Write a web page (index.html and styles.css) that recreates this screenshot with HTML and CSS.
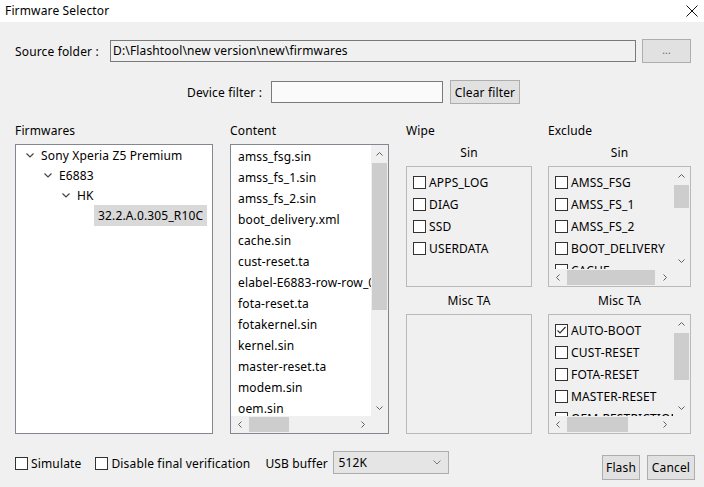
FILE: index.html
```html
<!DOCTYPE html>
<html>
<head>
<meta charset="utf-8">
<title>Firmware Selector</title>
<link rel="stylesheet" href="styles.css">
</head>
<body>
<div class="titlebar">
  <span class="title">Firmware Selector</span>
  <svg class="close" width="12" height="12" viewBox="0 0 12 12"><path d="M0.5 0.5 L11.5 11.5 M11.5 0.5 L0.5 11.5" stroke="#111" stroke-width="1" fill="none"/></svg>
</div>
<div class="main">
  <div class="row source">
    <span class="lbl src-lbl">Source folder :</span>
    <div class="textbox src-box">D:\Flashtool\new version\new\firmwares</div>
    <div class="btn dots">...</div>
  </div>
  <div class="row filter">
    <span class="lbl flt-lbl">Device filter :</span>
    <div class="textbox flt-box"></div>
    <div class="btn clear">Clear filter</div>
  </div>

  <div class="panels">
    <div class="col col-fw">
      <div class="plabel">Firmwares</div>
      <div class="tree">
        <div class="node l0"><span class="chevbox"><svg width="8" height="5" viewBox="0 0 8 5"><polyline points="0.5,0.5 4,4 7.5,0.5" fill="none" stroke="#444" stroke-width="1.2"/></svg></span><span>Sony Xperia Z5 Premium</span></div>
        <div class="node l1"><span class="chevbox"><svg width="8" height="5" viewBox="0 0 8 5"><polyline points="0.5,0.5 4,4 7.5,0.5" fill="none" stroke="#444" stroke-width="1.2"/></svg></span><span>E6883</span></div>
        <div class="node l2"><span class="chevbox"><svg width="8" height="5" viewBox="0 0 8 5"><polyline points="0.5,0.5 4,4 7.5,0.5" fill="none" stroke="#444" stroke-width="1.2"/></svg></span><span>HK</span></div>
        <div class="node l3"><span class="sel">32.2.A.0.305_R10C</span></div>
      </div>
    </div>

    <div class="col col-content">
      <div class="plabel">Content</div>
      <div class="sbox content-box">
        <div class="list files">
          <div class="item">amss_fsg.sin</div>
          <div class="item">amss_fs_1.sin</div>
          <div class="item">amss_fs_2.sin</div>
          <div class="item">boot_delivery.xml</div>
          <div class="item">cache.sin</div>
          <div class="item">cust-reset.ta</div>
          <div class="item">elabel-E6883-row-row_04a-sw-hk.sin</div>
          <div class="item">fota-reset.ta</div>
          <div class="item">fotakernel.sin</div>
          <div class="item">kernel.sin</div>
          <div class="item">master-reset.ta</div>
          <div class="item">modem.sin</div>
          <div class="item">oem.sin</div>
          <div class="item">partition-image.sin</div>
        </div>
        <div class="vs">
          <span class="arr"><svg width="7" height="4" viewBox="0 0 7 4"><polyline points="0.5,3.5 3.5,0.5 6.5,3.5" fill="none" stroke="#606060" stroke-width="1"/></svg></span>
          <div class="track"><div class="vthumb th-content"></div></div>
          <span class="arr"><svg width="7" height="4" viewBox="0 0 7 4"><polyline points="0.5,0.5 3.5,3.5 6.5,0.5" fill="none" stroke="#606060" stroke-width="1"/></svg></span>
        </div>
        <div class="hs">
          <span class="arr"><svg width="4" height="7" viewBox="0 0 4 7"><polyline points="3.5,0.5 0.5,3.5 3.5,6.5" fill="none" stroke="#606060" stroke-width="1"/></svg></span>
          <div class="track"><div class="hthumb hth-content"></div></div>
          <span class="arr"><svg width="4" height="7" viewBox="0 0 4 7"><polyline points="0.5,0.5 3.5,3.5 0.5,6.5" fill="none" stroke="#606060" stroke-width="1"/></svg></span>
        </div>
        <div class="corner"></div>
      </div>
    </div>

    <div class="col col-wipe">
      <div class="plabel">Wipe</div>
      <div class="sublabel">Sin</div>
      <div class="group g-top">
        <div class="checks">
          <div class="chk"><span class="cb"></span><span>APPS_LOG</span></div>
          <div class="chk"><span class="cb"></span><span>DIAG</span></div>
          <div class="chk"><span class="cb"></span><span>SSD</span></div>
          <div class="chk"><span class="cb"></span><span>USERDATA</span></div>
        </div>
      </div>
      <div class="sublabel sub2">Misc TA</div>
      <div class="group g-bot"></div>
    </div>

    <div class="col col-excl">
      <div class="plabel">Exclude</div>
      <div class="sublabel">Sin</div>
      <div class="group g-top sbox excl-box">
        <div class="list checks">
          <div class="chk"><span class="cb"></span><span>AMSS_FSG</span></div>
          <div class="chk"><span class="cb"></span><span>AMSS_FS_1</span></div>
          <div class="chk"><span class="cb"></span><span>AMSS_FS_2</span></div>
          <div class="chk"><span class="cb"></span><span>BOOT_DELIVERY</span></div>
          <div class="chk"><span class="cb"></span><span>CACHE</span></div>
        </div>
        <div class="vs">
          <span class="arr"><svg width="7" height="4" viewBox="0 0 7 4"><polyline points="0.5,3.5 3.5,0.5 6.5,3.5" fill="none" stroke="#606060" stroke-width="1"/></svg></span>
          <div class="track"><div class="vthumb th-sin"></div></div>
          <span class="arr"><svg width="7" height="4" viewBox="0 0 7 4"><polyline points="0.5,0.5 3.5,3.5 6.5,0.5" fill="none" stroke="#606060" stroke-width="1"/></svg></span>
        </div>
        <div class="hs">
          <span class="arr"><svg width="4" height="7" viewBox="0 0 4 7"><polyline points="3.5,0.5 0.5,3.5 3.5,6.5" fill="none" stroke="#606060" stroke-width="1"/></svg></span>
          <div class="track"><div class="hthumb hth-sin"></div></div>
          <span class="arr"><svg width="4" height="7" viewBox="0 0 4 7"><polyline points="0.5,0.5 3.5,3.5 0.5,6.5" fill="none" stroke="#606060" stroke-width="1"/></svg></span>
        </div>
        <div class="corner"></div>
      </div>
      <div class="sublabel sub2">Misc TA</div>
      <div class="group g-bot sbox excl-box">
        <div class="list checks">
          <div class="chk"><span class="cb checked"><svg width="11" height="11" viewBox="0 0 11 11"><polyline points="1.5,5.5 4,8 9.5,2" fill="none" stroke="#333" stroke-width="1.2"/></svg></span><span>AUTO-BOOT</span></div>
          <div class="chk"><span class="cb"></span><span>CUST-RESET</span></div>
          <div class="chk"><span class="cb"></span><span>FOTA-RESET</span></div>
          <div class="chk"><span class="cb"></span><span>MASTER-RESET</span></div>
          <div class="chk"><span class="cb"></span><span>OEM-RESTRICTION</span></div>
        </div>
        <div class="vs">
          <span class="arr"><svg width="7" height="4" viewBox="0 0 7 4"><polyline points="0.5,3.5 3.5,0.5 6.5,3.5" fill="none" stroke="#606060" stroke-width="1"/></svg></span>
          <div class="track"><div class="vthumb th-ta"></div></div>
          <span class="arr"><svg width="7" height="4" viewBox="0 0 7 4"><polyline points="0.5,0.5 3.5,3.5 6.5,0.5" fill="none" stroke="#606060" stroke-width="1"/></svg></span>
        </div>
        <div class="hs">
          <span class="arr"><svg width="4" height="7" viewBox="0 0 4 7"><polyline points="3.5,0.5 0.5,3.5 3.5,6.5" fill="none" stroke="#606060" stroke-width="1"/></svg></span>
          <div class="track"><div class="hthumb hth-ta"></div></div>
          <span class="arr"><svg width="4" height="7" viewBox="0 0 4 7"><polyline points="0.5,0.5 3.5,3.5 0.5,6.5" fill="none" stroke="#606060" stroke-width="1"/></svg></span>
        </div>
        <div class="corner"></div>
      </div>
    </div>
  </div>

  <div class="bottom">
    <div class="chk bchk sim"><span class="cb"></span><span>Simulate</span></div>
    <div class="chk bchk dis"><span class="cb"></span><span>Disable final verification</span></div>
    <span class="lbl usb-lbl">USB buffer</span>
    <div class="combo"><span>512K</span><svg width="8" height="5" viewBox="0 0 8 5"><polyline points="0.5,0.5 4,4 7.5,0.5" fill="none" stroke="#7a7a7a" stroke-width="1"/></svg></div>
    <div class="spacer"></div>
    <div class="btn flash">Flash</div>
    <div class="btn cancel">Cancel</div>
  </div>
</div>
</body>
</html>
```

FILE: styles.css
```css
* { box-sizing: border-box; margin: 0; padding: 0; }
html, body { width: 704px; height: 487px; overflow: hidden; }
body {
  background: #f0f0f0;
  font-family: "Noto Sans", "Liberation Sans", sans-serif;
  font-size: 12px;
  letter-spacing: 0.15px;
  color: #000;
}
.titlebar {
  height: 22px;
  background: #fff;
  display: flex;
  align-items: flex-start;
  justify-content: space-between;
  padding: 2px 6px 0 5px;
}
.title { line-height: 17px; }
.close { margin-top: 3px; }

.main { padding: 17px 13px 0 15px; }
.row { display: flex; align-items: center; height: 24px; }
.lbl { white-space: nowrap; }
.textbox {
  height: 22px;
  border: 1px solid #7a7a7a;
  background: #f0f0f0;
  line-height: 20px;
  padding: 0 2px;
  white-space: nowrap;
  overflow: hidden;
}
.btn {
  height: 24px;
  background: #e1e1e1;
  border: 1px solid #adadad;
  display: flex;
  align-items: center;
  justify-content: center;
  white-space: nowrap;
}
.src-lbl { width: 95px; flex: none; }
.src-box { flex: 1; }
.dots { width: 49px; margin-left: 6px; color: #666; font-size: 10px; padding-bottom: 3px; }

.filter { margin-top: 17px; padding-left: 172px; }
.flt-lbl { width: 84px; flex: none; }
.flt-box { width: 172px; background: #fafafa; }
.clear { width: 70px; margin-left: 7px; }

.panels { display: flex; margin-top: 18px; }
.col { display: flex; flex-direction: column; flex: none; }
.col-fw { width: 198px; }
.col-content { width: 159px; margin-left: 17px; }
.col-wipe { width: 126px; margin-left: 17px; }
.col-excl { width: 143px; margin-left: 16px; }
.plabel { height: 16px; line-height: 17px; margin-bottom: 6px; }
.sublabel { height: 16px; line-height: 17px; margin-bottom: 6px; text-align: center; }
.sub2 { margin-top: 5px; }

.tree {
  height: 290px;
  border: 1px solid #828790;
  background: #fff;
}
.node { display: flex; align-items: center; height: 20px; white-space: nowrap; }
.chevbox { width: 15px; display: flex; justify-content: center; align-items: center; margin-right: 4px; }
.l0 { padding-left: 6px; }
.l1 { padding-left: 24px; }
.l2 { padding-left: 42px; }
.l3 { padding-left: 78px; }
.sel { background: #d9d9d9; padding: 0 4px; line-height: 21px; }

.sbox {
  display: grid;
  grid-template-columns: 1fr 17px;
  grid-template-rows: 1fr 17px;
  overflow: hidden;
}
.content-box {
  height: 290px;
  border: 1px solid #828790;
  background: #fff;
}
.list { overflow: hidden; white-space: nowrap; }
.files { padding-top: 1px; }
.item { height: 21px; line-height: 21px; padding-left: 7px; }

.vs { display: flex; flex-direction: column; background: #f0f0f0; }
.hs { display: flex; flex-direction: row; background: #f0f0f0; }
.arr { flex: none; width: 17px; height: 17px; display: flex; align-items: center; justify-content: center; }
.track { flex: 1; display: flex; }
.vs .track { flex-direction: column; }
.vthumb { background: #cdcdcd; margin: 1px 1px 0 1px; width: 15px; }
.hthumb { background: #cdcdcd; margin: 1px 0 1px 1px; height: 15px; }
.corner { background: #f0f0f0; }
.th-content { height: 147px; }
.hth-content { width: 40px; }
.th-sin { height: 23px; }
.hth-sin { width: 88px; }
.th-ta { height: 47px; }
.hth-ta { width: 61px; }

.group { border: 1px solid #b9b9b9; background: #f0f0f0; }
.g-top { height: 121px; }
.g-bot { height: 120px; }
.checks { padding: 4px 0 0 6px; }
.chk { display: flex; align-items: center; height: 22px; white-space: nowrap; }
.cb {
  width: 13px; height: 13px; flex: none;
  border: 1px solid #333;
  background: #fff;
  margin-right: 3px;
  display: flex; align-items: center; justify-content: center;
}

.bottom { display: flex; align-items: flex-start; margin-top: 17px; margin-right: -4px; }
.bchk { height: 23px; padding-top: 1px; }
.dis { margin-left: 14px; }
.usb-lbl { margin-left: 15px; line-height: 25px; width: 68px; }
.combo {
  width: 116px; height: 23px;
  background: #e5e5e5;
  border: 1px solid #adadad;
  display: flex; align-items: center; justify-content: space-between;
  padding: 0 7px 0 4px;
}
.spacer { flex: 1; }
.flash { width: 38px; height: 25px; margin-top: 4px; }
.cancel { width: 48px; height: 25px; margin-top: 4px; margin-left: 7px; }
```
